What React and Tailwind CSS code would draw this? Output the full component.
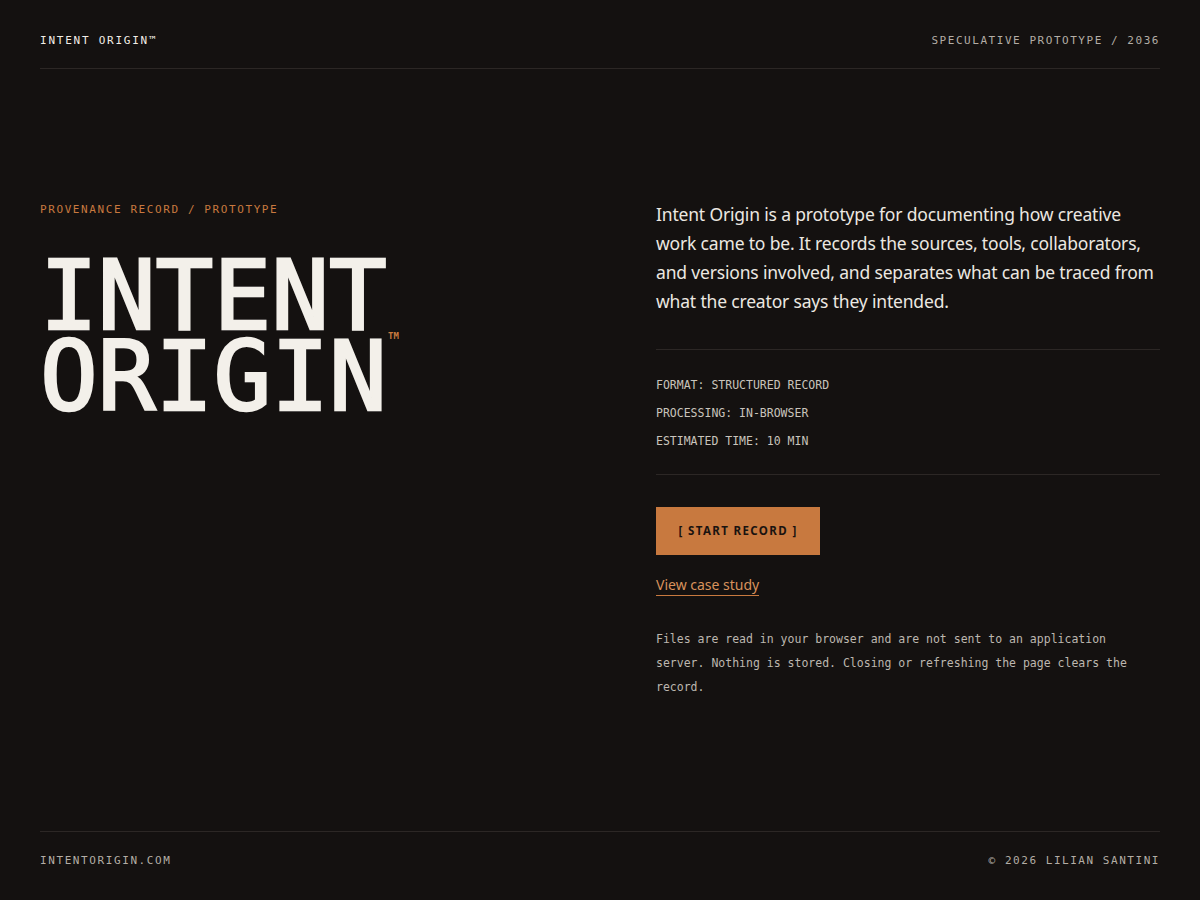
import React from 'react';

const mono = "font-['DejaVu_Sans_Mono','Liberation_Mono',monospace]";
const sans = "font-['Noto_Sans','Liberation_Sans',sans-serif]";

const meta = ['FORMAT: STRUCTURED RECORD', 'PROCESSING: IN-BROWSER', 'ESTIMATED TIME: 10 MIN'];

export default function App() {
  return (
    <div className={`min-h-screen bg-[#141110] text-[#f1ede6] flex flex-col px-10 ${mono}`}>
      {/* header */}
      <header className="h-[69px] flex items-end justify-between pb-[19px] border-b border-[#2c2725]">
        <span className="text-[11px] leading-4 tracking-[0.16em] text-[#f1ede6]">INTENT ORIGIN™</span>
        <span className="text-[11px] leading-4 tracking-[0.14em] text-[#b3ada5]">SPECULATIVE PROTOTYPE / 2036</span>
      </header>

      <main className="flex-1 grid grid-cols-2 gap-x-[112px] pt-[133px]">
        <div>
          <div className="text-[11px] tracking-[0.145em] text-[#c8793f] leading-4">PROVENANCE RECORD / PROTOTYPE</div>
          <h1 className="mt-[38px] text-[96px] leading-[81px] font-normal text-[#f3f0ea] [-webkit-text-stroke:2.5px_#f3f0ea] relative inline-block">
            INTENT
            <br />
            ORIGIN
            <span className="absolute left-[348px] top-[76px] text-[9px] leading-none text-[#c8793f] font-bold [-webkit-text-stroke:0]">TM</span>
          </h1>
        </div>

        <div>
          <p className={`${sans} -mt-[2px] text-[17.5px] leading-[29px] tracking-[-0.01em] text-[#ece8e1]`}>
            Intent Origin is a prototype for documenting how creative work came to be. It records the sources, tools,
            collaborators, and versions involved, and separates what can be traced from what the creator says they
            intended.
          </p>
          <div className="mt-[33px] border-t border-[#2c2725] pt-[27px] pb-[25px] flex flex-col gap-[12px]">
            {meta.map(m => (
              <div key={m} className="text-[11.5px] leading-4 text-[#c9c4bc]">{m}</div>
            ))}
          </div>
          <div className="border-t border-[#2c2725] pt-[32px]">
            <button className={`${sans} h-12 w-[164px] bg-[#c8793f] text-[#1a1310] text-[11.5px] font-bold tracking-[0.12em]`}>
              [ START RECORD ]
            </button>
            <div className="mt-[18px]">
              <a href="#" className={`${sans} text-[14px] text-[#d8925c] border-b border-[#c8793f] leading-5 pb-[1px]`}>View case study</a>
            </div>
            <p className="mt-[30px] text-[11.5px] leading-6 text-[#bdb7af]">
              Files are read in your browser and are not sent to an application server. Nothing is stored. Closing or
              refreshing the page clears the record.
            </p>
          </div>
        </div>
      </main>

      {/* footer */}
      <footer className="h-[69px] border-t border-[#2c2725] flex items-start justify-between pt-[21px]">
        <span className="text-[11px] leading-4 tracking-[0.145em] text-[#b3ada5]">INTENTORIGIN.COM</span>
        <span className="text-[11px] leading-4 tracking-[0.14em] text-[#b3ada5]">© 2026 LILIAN SANTINI</span>
      </footer>
    </div>
  );
}
